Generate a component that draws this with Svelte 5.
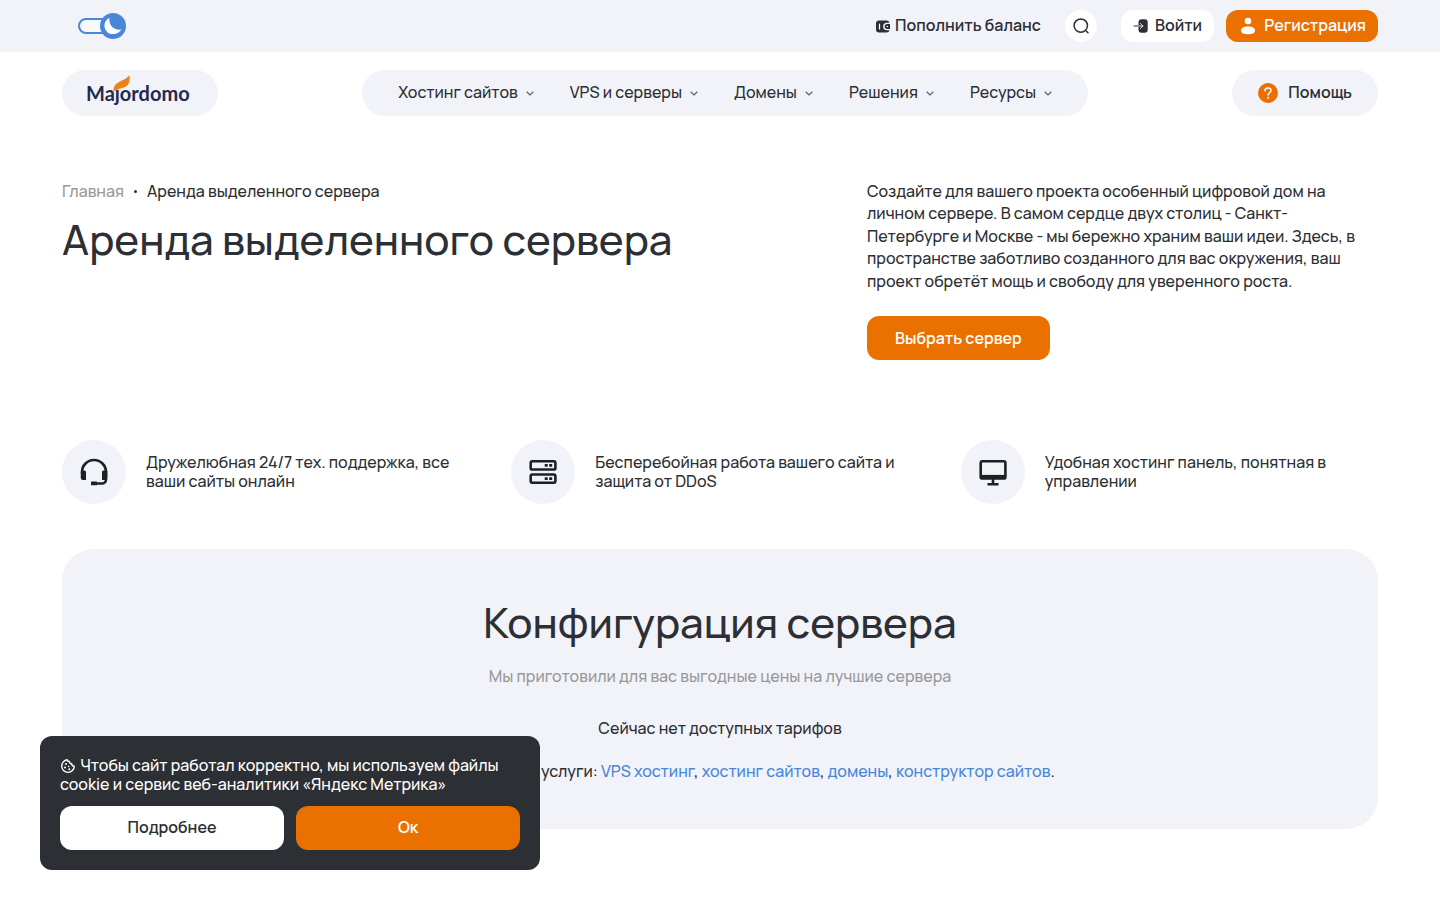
<script>
  let dark = $state(false);
  let cookiesOpen = $state(true);
  const menu = ['Хостинг сайтов', 'VPS и серверы', 'Домены', 'Решения', 'Ресурсы'];
  const services = ['VPS хостинг', 'хостинг сайтов', 'домены', 'конструктор сайтов'];
  const benefits = [
    { icon: 'support', text: 'Дружелюбная 24/7 тех. поддержка, все ваши сайты онлайн' },
    { icon: 'server', text: 'Бесперебойная работа вашего сайта и защита от DDoS' },
    { icon: 'screen', text: 'Удобная хостинг панель, понятная в управлении' }
  ];
</script>

<div class="topbar">
  <button class="theme" aria-label="Сменить тему" aria-pressed={dark} onclick={() => (dark = !dark)}>
    <svg width="50" height="28" viewBox="0 0 50 28">
      <rect x="2" y="7" width="40" height="14" rx="7" fill="#f7f9fd" stroke="#4a86d8" stroke-width="2" />
      <circle cx="36" cy="14" r="13" fill="#4a86d8" />
      <path d="M32.500 6C27 8.500 26.200 14.500 29.300 18.900C32.500 23.500 41 23.300 44.300 17.500C37 18.500 31.500 13.500 32.500 6Z" fill="#fff" />
    </svg>
  </button>
  <div class="account">
    <a class="balance" href="#balance">
      <svg width="15" height="13" viewBox="0 0 15 13">
        <path d="M3 .5h7.500a3 3 0 0 1 3 2.200h-2.600a3.700 3.700 0 0 0 0 7.500h2.600a3 3 0 0 1-3 2.300H3a3 3 0 0 1-3-3v-6a3 3 0 0 1 3-3Z" fill="#2c2f34" />
        <path d="M3.500 4v5" stroke="#fff" stroke-width="1.200" stroke-linecap="round" />
        <path d="M11.200 4H14v5h-2.800a2.500 2.500 0 0 1 0-5Z" fill="#2c2f34" />
        <circle cx="11.300" cy="6.500" r=".8" fill="#fff" />
      </svg>
      Пополнить баланс
    </a>
    <button class="search" aria-label="Поиск">
      <svg width="18" height="18" viewBox="0 0 18 18" fill="none" stroke="#2c2f34" stroke-width="1.500" stroke-linecap="round">
        <circle cx="8.800" cy="8.600" r="6.700" /><path d="m13.700 13.500 2.300 2.300" />
      </svg>
    </button>
    <a class="login" href="#login">
      <svg width="16" height="16" viewBox="0 0 16 16" fill="none">
        <path d="M8 1.300h3.700a3 3 0 0 1 3 3v7.400a3 3 0 0 1-3 3H8.500a3 3 0 0 1-3-3V4.300a3 3 0 0 1 3-3Z" fill="#2c2f34" />
        <path d="M1 8h5" stroke="#2c2f34" stroke-linecap="round" />
        <path d="M5.500 8h4.500m-2.700-2.500L10 8l-2.700 2.500" stroke="#dfe1e6" stroke-linecap="round" stroke-linejoin="round" />
      </svg>
      Войти
    </a>
    <a class="register" href="#register">
      <svg width="16" height="18" viewBox="0 0 16 18" fill="#fff">
        <circle cx="8" cy="4" r="3.300" />
        <path d="M1 13.500C1 10.700 4 9.500 8 9.500s7 1.200 7 4S12 17.300 8 17.300s-7-1-7-3.800Z" />
      </svg>
      Регистрация
    </a>
  </div>
</div>

<header class="header">
  <a class="pill logo" href="#home" aria-label="Majordomo">
    <svg width="108" height="36" viewBox="0 0 108 36">
      <text x="0" y="26" class="wordmark">Majordomo</text>
      <path d="M27.500 17C27 11 30 8.500 34 6.500C38 4.600 41.500 3 43.500 .3C44.500 7 42.500 10.500 38.500 12.200C34 14 30.500 14 27.500 17Z" fill="#ef7f1a" />
    </svg>
  </a>
  <nav class="pill menu">
    {#each menu as item}
      <button>
        {item}
        <svg width="8" height="5" viewBox="0 0 8 5" fill="none" stroke="#5a5e65" stroke-width="1.200"><path d="m.7.7 3.300 3.200L7.300.7" /></svg>
      </button>
    {/each}
  </nav>
  <a class="pill help" href="#help">
    <svg width="20" height="20" viewBox="0 0 20 20" fill="none">
      <circle cx="10" cy="10" r="10" fill="#ea7000" />
      <path d="M7 7.800C7 5.900 8.300 4.900 10 4.900s3 1 3 2.600c0 2.200-2.800 2.300-2.800 4.500" stroke="#fff" stroke-width="1.500" stroke-linecap="round" />
      <circle cx="10.200" cy="14.700" r="1" fill="#fff" />
    </svg>
    Помощь
  </a>
</header>

<main>
  <section class="hero">
    <div>
      <nav class="crumbs">
        <a href="#home">Главная</a><i></i><span>Аренда выделенного сервера</span>
      </nav>
      <h1>Аренда выделенного сервера</h1>
    </div>
    <div>
      <p>Создайте для вашего проекта особенный цифровой дом на личном сервере. В самом сердце двух столиц - Санкт-Петербурге и Москве - мы бережно храним ваши идеи. Здесь, в пространстве заботливо созданного для вас окружения, ваш проект обретёт мощь и свободу для уверенного роста.</p>
      <a class="choose" href="#config">Выбрать сервер</a>
    </div>
  </section>

  <ul class="benefits">
    {#each benefits as item}
      <li>
        <span class="round">
          <svg width="32" height="32" viewBox="0 0 32 32" fill="none" stroke="#1e2024" stroke-width="2.600">
            {#if item.icon === 'support'}
              <path d="M4 18v-2a12 12 0 0 1 24 0v7.500a4 4 0 0 1-4 4h-7" />
              <path d="M3 14.500h3.500a1.500 1.500 0 0 1 1.500 1.500v8H5.500a2.800 2.800 0 0 1-2.800-2.800ZM29.300 14.500h-3.800A1.500 1.500 0 0 0 24 16v8h2.500a2.800 2.800 0 0 0 2.800-2.800Z" fill="#1e2024" stroke="none" />
              <rect x="13" y="25.400" width="6" height="3.900" rx=".6" fill="#1e2024" stroke="none" />
            {:else if item.icon === 'server'}
              <rect x="3.700" y="5.300" width="24.700" height="8.200" rx="1.600" />
              <rect x="3.700" y="18.500" width="24.700" height="8.200" rx="1.600" />
              <path d="M17.700 9.400h3m1.500 0h3M17.700 22.600h3m1.500 0h3" />
            {:else}
              <rect x="3.700" y="5.300" width="24.700" height="17.200" rx="1.600" />
              <path d="M4 20.700h24.200" stroke-width="3.600" />
              <path d="M16 22v6M10.500 28.200h11" />
            {/if}
          </svg>
        </span>
        <span>{item.text}</span>
      </li>
    {/each}
  </ul>

  <section class="config" id="config">
    <h2>Конфигурация сервера</h2>
    <p class="muted">Мы приготовили для вас выгодные цены на лучшие сервера</p>
    <p class="empty">Сейчас нет доступных тарифов</p>
    <p class="others">
      Посмотрите другие услуги:
      {#each services as item, i}<a href="#services">{item}</a>{i < services.length - 1 ? ', ' : '.'}{/each}
    </p>
  </section>
</main>

{#if cookiesOpen}
  <aside class="cookies" aria-label="Файлы cookie">
    <p>
      <svg width="16" height="16" viewBox="0 0 16 16" fill="none" stroke="#fff" stroke-width="1.400" stroke-linejoin="round">
        <path d="M7.200 1.800A6.300 6.300 0 1 0 14.300 8.200C12.700 8.200 11.700 7.300 11.700 5.800C9.500 5.900 9.500 4.300 9.600 3.500C8.300 3.700 7.400 3 7.200 1.800Z" />
        <g fill="#fff" stroke="none"><circle cx="6" cy="6" r="1" /><circle cx="5" cy="9.600" r="1" /><circle cx="8.600" cy="8.500" r=".8" /><circle cx="9.300" cy="11.300" r="1" /></g>
      </svg>
      Чтобы сайт работал корректно, мы используем файлы cookie и сервис веб-аналитики «Яндекс Метрика»
    </p>
    <div class="actions">
      <button>Подробнее</button>
      <button class="ok" onclick={() => (cookiesOpen = false)}>Ок</button>
    </div>
  </aside>
{/if}

<style>
  :global(body) {
    background: #fff;
    color: #2c2f34;
    font: 500 16px/22px Manrope, Inter, sans-serif;
  }
  a { color: inherit; text-decoration: none; }
  button { font: inherit; color: inherit; background: none; border: 0; padding: 0; cursor: pointer; }
  svg { display: block; flex: none; }
  p, h1, h2, ul { margin: 0; padding: 0; }

  .topbar {
    display: flex;
    align-items: center;
    justify-content: space-between;
    height: 52px;
    padding: 0 62px;
    background: #f2f3f9;
  }
  .theme { margin-left: 15px; }
  .account { display: flex; align-items: center; font-weight: 600; }
  .balance { display: flex; align-items: center; gap: 4px; padding-bottom: 2px; }
  .balance svg, .login svg, .register svg, .menu svg, .help svg { margin-top: 2px; }
  .search {
    display: grid;
    place-items: center;
    width: 32px;
    height: 32px;
    margin: 0 24px;
    border-radius: 50%;
    background: #fff;
  }
  .login, .register {
    display: flex;
    align-items: center;
    box-sizing: border-box;
    height: 32px;
    padding: 0 12px 2px;
    border-radius: 12px;
    background: #fff;
  }
  .login { gap: 6px; }
  .register { gap: 8px; margin-left: 12px; padding-left: 14px; background: #ea7000; color: #fff; }

  .header {
    display: flex;
    justify-content: space-between;
    padding: 18px 62px 0;
  }
  .pill {
    display: flex;
    align-items: center;
    box-sizing: border-box;
    height: 46px;
    border-radius: 23px;
    background: #f2f3f9;
  }
  .logo { padding: 0 24px; }
  .logo svg { overflow: visible; }
  .wordmark { font: 700 20px Lato, sans-serif; fill: #25284f; }
  .menu { gap: 36px; padding: 0 36px 2px; }
  .menu button { display: flex; align-items: center; gap: 8px; }
  .help { gap: 10px; padding: 0 26px 2px; font-weight: 600; }

  main { padding: 64px 62px 71px; }
  .hero { display: grid; grid-template-columns: 805fr 511fr; }
  .hero p { line-height: 1.4; }
  .crumbs { display: flex; align-items: center; }
  .crumbs a { color: #999; }
  .crumbs i { width: 3px; height: 3px; margin: 0 10px; border-radius: 50%; background: #2c2f34; }
  h1, h2 { font-size: 42px; line-height: 50px; font-weight: 500; }
  h1 { margin-top: 12px; }
  .choose {
    display: inline-block;
    margin-top: 24px;
    padding: 11px 28px;
    border-radius: 12px;
    background: #ea7000;
    color: #fff;
    font-weight: 600;
  }

  .benefits {
    display: grid;
    grid-template-columns: repeat(3, 1fr);
    gap: 32px;
    margin-top: 80px;
    list-style: none;
    line-height: 19px;
  }
  .benefits li { display: flex; align-items: center; gap: 20px; }
  .round {
    display: grid;
    flex: none;
    place-items: center;
    width: 64px;
    height: 64px;
    border-radius: 50%;
    background: #f2f3f9;
  }

  .config {
    margin-top: 45px;
    padding: 48px 40px 47px;
    border-radius: 32px;
    background: #f2f3f9;
    text-align: center;
  }
  .muted { margin-top: 18px; color: #999; }
  .empty { margin-top: 30px; }
  .others { margin-top: 21px; }
  .others a { color: #4a86d8; }

  .cookies {
    position: fixed;
    left: 40px;
    bottom: 30px;
    box-sizing: border-box;
    width: 500px;
    max-width: calc(100% - 80px);
    padding: 20px;
    border-radius: 12px;
    background: #2c2f34;
    color: #fff;
    line-height: 19px;
  }
  .cookies svg { display: inline-block; margin-right: 1px; vertical-align: -3px; }
  .actions { display: grid; grid-template-columns: 1fr 1fr; gap: 12px; margin-top: 12px; }
  .actions button { height: 44px; padding-bottom: 2px; border-radius: 12px; background: #fff; color: #2c2f34; font-weight: 600; }
  .actions .ok { background: #ea7000; color: #fff; }
</style>
